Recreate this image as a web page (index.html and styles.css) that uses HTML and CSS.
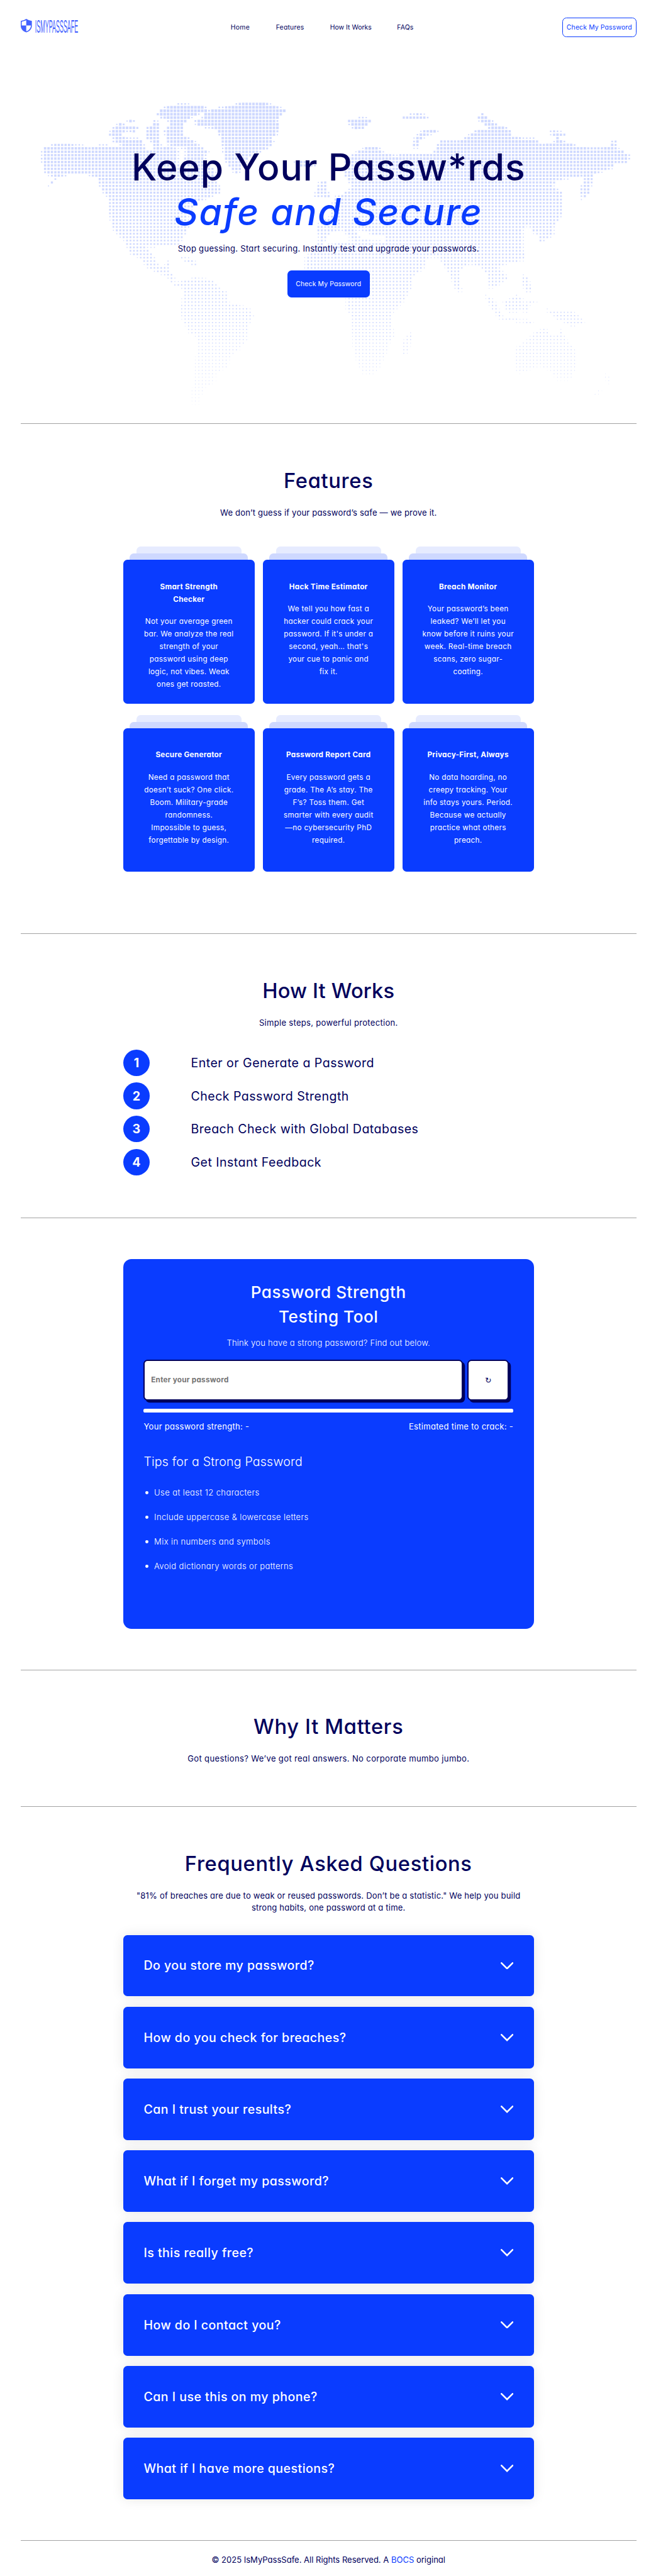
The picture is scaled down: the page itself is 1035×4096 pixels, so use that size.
FILE: index.html
```
<!DOCTYPE html>
<html lang="en">
<head>
<meta charset="utf-8">
<title>IsMyPassSafe</title>
<link rel="stylesheet" href="styles.css">
</head>
<body>
<header class="header">
  <svg class="logo" viewBox="0 0 140 33" role="img" aria-label="IsMyPassSafe">
    <path fill="#4361ff" d="M13.5 0Q20 4.500 27 5V17C27 25 21 31 13.5 33C6 31 0 25 0 17V5Q7 4.500 13.5 0Z"/>
    <path fill="#fff" d="M13.300 3.500V16H2.300V6.800Q8 6 13.300 3.500ZM13.300 16H24.700C24.500 23 20 28 13.300 30.300Z"/>
    <text class="logo-text" transform="translate(35 33) scale(.4 1)" textLength="262" lengthAdjust="spacingAndGlyphs">ISMYPASSSAFE</text>
  </svg>
  <nav class="nav">
    <a class="nav-home">Home</a>
    <a class="nav-features">Features</a>
    <a class="nav-how">How It Works</a>
    <a>FAQs</a>
  </nav>
  <a class="btn btn-outline">Check My Password</a>
</header>

<section class="hero">
  <svg class="map" id="map" viewBox="0 90.500 1600 940" aria-hidden="true"></svg>
  <h1>Keep Your Passw*rds<br><em>Safe and Secure</em></h1>
  <p class="sub sub-hero">Stop guessing. Start securing. Instantly test and upgrade your passwords.</p>
  <a class="btn btn-solid">Check My Password</a>
</section>
<hr>

<section class="features">
  <h2>Features</h2>
  <p class="sub">We don’t guess if your password’s safe — we prove it.</p>
  <div class="cards">
    <article class="card"><h3>Smart Strength<br>Checker</h3><p>Not your average green<br>bar. We analyze the real<br>strength of your<br>password using deep<br>logic, not vibes. Weak<br>ones get roasted.</p></article>
    <article class="card"><h3>Hack Time Estimator</h3><p>We tell you how fast a<br>hacker could crack your<br>password. If it's under a<br>second, yeah… that's<br>your cue to panic and<br>fix it.</p></article>
    <article class="card"><h3>Breach Monitor</h3><p>Your password’s been<br>leaked? We’ll let you<br>know before it ruins your<br>week. Real-time breach<br>scans, zero sugar-<br>coating.</p></article>
    <article class="card"><h3>Secure Generator</h3><p>Need a password that<br>doesn’t suck? One click.<br>Boom. Military-grade<br>randomness.<br>Impossible to guess,<br>forgettable by design.</p></article>
    <article class="card"><h3>Password Report Card</h3><p>Every password gets a<br>grade. The A’s stay. The<br>F’s? Toss them. Get<br>smarter with every audit<br>—no cybersecurity PhD<br>required.</p></article>
    <article class="card"><h3>Privacy-First, Always</h3><p>No data hoarding, no<br>creepy tracking. Your<br>info stays yours. Period.<br>Because we actually<br>practice what others<br>preach.</p></article>
  </div>
</section>
<hr>

<section class="how">
  <h2 class="tight">How It Works</h2>
  <p class="sub sub-how">Simple steps, powerful protection.</p>
  <ol class="steps">
    <li><b>1</b><span>Enter or Generate a Password</span></li>
    <li><b>2</b><span>Check Password Strength</span></li>
    <li><b>3</b><span>Breach Check with Global Databases</span></li>
    <li><b>4</b><span>Get Instant Feedback</span></li>
  </ol>
</section>
<hr>

<section class="tester">
  <div class="tool">
    <h2>Password Strength<br>Testing Tool</h2>
    <p class="tool-sub">Think you have a strong password? Find out below.</p>
    <div class="entry">
      <div class="box field">Enter your password</div>
      <div class="box refresh">↻</div>
    </div>
    <div class="meter"></div>
    <div class="readout"><span>Your password strength: -</span><span>Estimated time to crack: -</span></div>
    <h3>Tips for a Strong Password</h3>
    <ul>
      <li>Use at least 12 characters</li>
      <li>Include uppercase &amp; lowercase letters</li>
      <li>Mix in numbers and symbols</li>
      <li>Avoid dictionary words or patterns</li>
    </ul>
  </div>
</section>
<hr>

<section class="why">
  <h2>Why It Matters</h2>
  <p class="sub sub-why">Got questions? We’ve got real answers. No corporate mumbo jumbo.</p>
</section>
<hr>

<section class="faq">
  <h2>Frequently Asked Questions</h2>
  <p class="sub">"81% of breaches are due to weak or reused passwords. Don’t be a statistic." We help you build<br>strong habits, one password at a time.</p>
  <div class="questions">
    <div class="question"><span>Do you store my password?</span><svg class="chevron" viewBox="0 0 31 18"><path d="M2 2 15.500 15.500 29 2"/></svg></div>
    <div class="question"><span>How do you check for breaches?</span><svg class="chevron" viewBox="0 0 31 18"><path d="M2 2 15.500 15.500 29 2"/></svg></div>
    <div class="question"><span>Can I trust your results?</span><svg class="chevron" viewBox="0 0 31 18"><path d="M2 2 15.500 15.500 29 2"/></svg></div>
    <div class="question"><span>What if I forget my password?</span><svg class="chevron" viewBox="0 0 31 18"><path d="M2 2 15.500 15.500 29 2"/></svg></div>
    <div class="question"><span>Is this really free?</span><svg class="chevron" viewBox="0 0 31 18"><path d="M2 2 15.500 15.500 29 2"/></svg></div>
    <div class="question"><span>How do I contact you?</span><svg class="chevron" viewBox="0 0 31 18"><path d="M2 2 15.500 15.500 29 2"/></svg></div>
    <div class="question"><span>Can I use this on my phone?</span><svg class="chevron" viewBox="0 0 31 18"><path d="M2 2 15.500 15.500 29 2"/></svg></div>
    <div class="question"><span>What if I have more questions?</span><svg class="chevron" viewBox="0 0 31 18"><path d="M2 2 15.500 15.500 29 2"/></svg></div>
  </div>
</section>
<hr>
<footer>© 2025 IsMyPassSafe. All Rights Reserved. A <a>BOCS</a> original</footer>
<script src="map.js"></script>
</body>
</html>
```
FILE: styles.css
```
/* 1rem is ten design pixels; --ls is the tracking in em, resolved per element */
html { font-size: 6.528px; overflow: hidden; --ls: .021; }
* { box-sizing: border-box; letter-spacing: calc(var(--ls) * 1em); }
body {
  margin: 0;
  width: 160rem;
  background: #fff;
  color: #00005c;
  font-family: Inter, "Open Sans", sans-serif;
  font-feature-settings: "cv11";
}
h1, h2, h3, p, ul, ol { margin: 0; padding: 0; font-weight: 400; }
ul, ol { list-style: none; }
hr {
  height: .2rem;
  margin: 0 5rem;
  border: 0;
  border-top: 1px solid #a3a3a3;
}

.header { display: flex; height: 9.05rem; padding: 4.3rem 5rem 0; font-size: 1.6rem; }
.logo { width: 14rem; height: 3.3rem; margin-top: .3rem; overflow: visible; }
.logo-text { font: 400 45px "Liberation Sans", sans-serif; fill: #4361ff; --ls: 0; }
.nav { display: flex; flex: 1; align-items: center; padding-left: 37.2rem; --ls: .02; }
.nav a { white-space: nowrap; }
.nav-home { width: 11rem; }
.nav-features { width: 13.2rem; }
.nav-how { width: 16.3rem; --ls: 0; }
.btn {
  display: flex;
  align-items: center;
  justify-content: center;
  border-radius: 1rem;
  font-size: 1.6rem;
  --ls: .013;
}
.btn-outline { width: 18.1rem; height: 4.75rem; border: 1px solid #0a3cff; color: #0a3cff; }
.btn-solid { position: relative; width: 20.1rem; height: 6.5rem; margin: 3.75rem auto 0; background: #0a3cff; color: #fff; }

.hero { position: relative; height: 94.05rem; padding-top: 26.4rem; text-align: center; }
.map { position: absolute; left: 0; top: 0; width: 160rem; height: 94rem; }
h1 { position: relative; font-size: 9rem; line-height: 10.8rem; font-weight: 500; --ls: .015; }
h1 em { color: #0a3cff; --ls: .028; }
.sub { font-size: 2rem; line-height: 3rem; margin-top: 2.6rem; text-align: center; --ls: .0145; }
.sub-hero { position: relative; margin-top: 2.1rem; --ls: .0215; }
.sub-how { --ls: .022; }
.sub-why { --ls: .027; }

h2 { font-size: 5rem; line-height: 7.5rem; font-weight: 500; text-align: center; --ls: .021; }
h2.tight { --ls: .005; }
.features, .how, .why, .faq { padding-top: 10rem; }
.features { height: 124.05rem; }
.how { height: 68.95rem; }
.why { height: 33.1rem; }
.faq { height: 178.6rem; }

.cards {
  display: grid;
  grid-template-columns: repeat(3, 32rem);
  grid-auto-rows: 34.95rem;
  gap: 6.05rem 2rem;
  justify-content: center;
  margin-top: 10rem;
}
.card {
  position: relative;
  padding-top: 5.1rem;
  border-radius: 1rem;
  background: #0a3cff;
  color: #fff;
  text-align: center;
  font-size: 1.8rem;
  line-height: 3.06rem;
  --ls: .025;
}
.card::before, .card::after { content: ""; position: absolute; border-radius: 1rem 1rem 0 0; height: 1.6rem; }
.card::before { top: -1.6rem; left: 1.6rem; right: 1.6rem; background: #ced8ff; }
.card::after { top: -3.2rem; left: 3.2rem; right: 3.2rem; background: #e6ebff; }
.card h3 { font-size: 1.8rem; font-weight: 700; --ls: .023; }
.card p { margin-top: 2.4rem; }

.steps { display: grid; gap: 1.62rem; margin: 5rem 30rem 0; }
.steps li { display: flex; align-items: center; gap: 10.05rem; height: 6.45rem; font-size: 3rem; --ls: .0235; }
.steps b {
  display: grid;
  place-items: center;
  width: 6.45rem;
  height: 6.45rem;
  border-radius: 50%;
  background: #0a3cff;
  color: #fff;
  --ls: 0;
}

.tester { padding: 10rem 30rem 0; height: 110rem; }
.tool { height: 90rem; padding: 5rem; border-radius: 2rem; background: #0a3cff; color: #fff; font-size: 2rem; line-height: 3rem; }
.tool h2 { font-size: 4rem; line-height: 6rem; }
.tool-sub { margin-top: 2rem; text-align: center; font-weight: 300; --ls: .017; }
.entry { display: flex; gap: 1rem; margin-top: 2.5rem; }
.box {
  display: flex;
  align-items: center;
  height: 9.95rem;
  border: .4rem solid #00005c;
  border-radius: 1rem;
  box-shadow: .5rem .5rem 0 #00005c;
  background: #fff;
}
.field { width: 77.8rem; padding-left: 1.5rem; color: #757575; font-size: 1.8rem; font-weight: 700; --ls: .019; }
.refresh { width: 10.2rem; justify-content: center; color: #00005c; font: 1.9rem "DejaVu Sans", sans-serif; --ls: 0; }
.meter { height: .8rem; margin-top: 2.05rem; border-radius: .4rem; background: #fff; }
.readout { display: flex; justify-content: space-between; margin-top: 2rem; }
.tool h3 { margin-top: 4.95rem; font-size: 3rem; line-height: 4.5rem; font-weight: 300; --ls: .01; }
.tool ul { display: grid; gap: 3rem; margin-top: 3.65rem; font-weight: 300; --ls: .029; }
.tool li { display: flex; align-items: center; gap: 1.4rem; padding-left: .4rem; }
.tool li::before { content: ""; width: .75rem; height: .75rem; border-radius: 50%; background: #fff; }

.questions { display: grid; gap: 2.5rem; margin: 5rem 30rem 0; }
.question {
  display: flex;
  align-items: center;
  justify-content: space-between;
  height: 15rem;
  padding: 0 5rem;
  border-radius: 1rem;
  background: #0a3cff;
  box-shadow: 0 0 3rem rgba(0, 0, 0, .1);
  color: #fff;
  font-size: 3rem;
  font-weight: 500;
  --ls: .0235;
}
.chevron { width: 3.1rem; height: 1.8rem; fill: none; stroke: #fff; stroke-width: 4; stroke-linecap: round; }

footer { margin-top: 3.1rem; font-size: 2rem; line-height: 3rem; text-align: center; --ls: -.001; }
footer a { color: #0a3cff; }
```
FILE: map.js
```
// Land outlines as flat x,y lists in chart units; each becomes a patch of the dot grid.
const LAND = [
  // North America
  "100,345 104,296 135,278 190,284 215,294 245,285 290,292 300,280 340,290 355,310 400,290 430,300 427,380 445,380 447,300 470,290 485,330 500,350 520,410 515,440 530,470 530,500 500,520 470,540 452,600 455,650 442,700 430,730 400,735 350,740 372,790 385,835 400,820 400,800 410,810 405,850 420,870 420,905 440,915 415,905 400,868 385,862 355,835 340,790 315,775 300,710 275,670 265,600 262,520 245,490 235,430 210,415 175,410 140,430 118,470 120,450 135,430 108,410",
  // Arctic islands
  "379,141 392,117 432,101 491,108 498,117 501,132 478,141 452,166 442,191 439,221 445,252 475,277 402,252 396,221 409,191 406,166 383,157",
  "264,231 274,203 290,184 307,200 333,200 326,224 304,218 297,224 290,246 267,252",
  "265,264 287,249 340,258 350,301 297,301 287,271",
  "356,197 366,197 373,169 383,184 383,258 389,286 373,307 369,271 353,255",
  "402,246 448,246 475,277 505,320 488,332 480,345 455,300 402,280",
  "303,171 318,165 330,178 312,182",
  // Greenland, Iceland
  "468,175 491,160 493,141 511,123 551,111 577,98 636,92 663,111 693,126 676,148 666,172 673,197 669,221 666,237 651,246 660,271 651,289 643,301 620,317 597,344 577,406 564,406 551,375 541,344 538,301 534,252 524,215 511,206 475,197",
  "705,355 750,350 765,375 720,385",
  // Caribbean, South America
  "432,785 462,795 482,825 465,822 440,800",
  "440,895 470,880 510,890 530,930 548,945 550,990 600,1015 612,1050 598,1100 595,1160 580,1195 555,1230 548,1280 520,1310 518,1345 495,1370 485,1410 478,1450 462,1445 460,1400 470,1330 468,1270 478,1200 475,1145 455,1125 437,1050 438,990 445,930 418,915 420,905",
  // Africa, Madagascar
  "735,790 755,760 765,740 830,720 880,710 930,720 960,730 1000,760 1025,790 1025,830 990,880 990,930 970,990 945,1040 945,1100 950,1140 935,1180 930,1225 915,1280 900,1312 872,1310 858,1240 850,1180 848,1060 833,1010 833,960 790,930 735,850",
  "970,1170 985,1125 994,1130 988,1180 978,1230 968,1225",
  // Britain, Eurasia
  "757,515 770,450 787,445 787,480 797,520",
  "765,740 770,690 762,670 765,640 800,600 800,560 805,520 830,500 850,470 830,420 830,350 855,320 885,292 910,292 925,320 950,330 990,325 1045,320 1060,262 1110,262 1130,240 1150,215 1185,215 1150,165 1160,140 1195,190 1230,215 1232,250 1290,255 1300,280 1335,275 1340,240 1355,265 1395,290 1440,296 1470,290 1475,262 1487,262 1482,295 1500,310 1518,330 1512,360 1480,360 1475,385 1430,415 1420,500 1403,530 1398,480 1410,425 1395,425 1340,440 1330,470 1352,490 1352,600 1335,650 1335,685 1300,725 1295,700 1310,685 1285,680 1275,640 1258,660 1262,800 1230,810 1200,830 1220,870 1225,885 1200,910 1180,930 1175,870 1160,830 1130,815 1105,850 1112,945 1098,935 1085,870 1070,820 1055,785 1025,790 990,765 950,735 930,720 930,685 895,690 885,670 850,660 870,700 858,715 840,690 825,665 800,670 790,690 775,740",
  // Arctic coast islands
  "835,175 870,160 897,170 880,205 855,212 845,195",
  "995,290 1000,250 1015,222 1055,210 1055,222 1027,240 1010,265 1005,300",
  "968,154 1010,143 1042,158 975,165",
  "1325,217 1375,235 1330,240",
  // South-east Asia
  "1258,860 1272,880 1282,940 1267,945 1258,900",
  "1168,955 1190,980 1210,1050 1238,1068 1205,1066 1185,1020",
  "1213,990 1245,955 1260,975 1252,1030 1223,1035",
  "1258,990 1300,985 1275,1000 1272,1035 1258,1030",
  "1225,1060 1285,1073 1282,1085 1225,1072",
  "1310,1015 1335,1030 1385,1035 1410,1080 1378,1098 1345,1068 1322,1035",
  // Australia, New Zealand
  "1245,1190 1270,1160 1290,1120 1315,1105 1325,1135 1345,1140 1350,1105 1362,1150 1385,1200 1390,1270 1375,1340 1340,1340 1330,1300 1300,1275 1245,1312 1240,1240",
  "1455,1305 1470,1330 1466,1362 1460,1340",
  "1428,1405 1445,1380 1452,1388 1438,1412"
].map(s => s.split(" ").map(p => p.split(",").map(Number)));

const STEP = 8.32, LEFT = 609 - 62 * STEP, TOP = 253.3;

function onLand(px, py) {
  const x = px * 0.9893, y = (py - 200) * 1.8447;
  return LAND.some(shape => {
    let inside = false;
    for (let i = 0, j = shape.length - 1; i < shape.length; j = i++) {
      const [ax, ay] = shape[i], [bx, by] = shape[j];
      if (ay > y !== by > y && x < ax + (bx - ax) * (y - ay) / (by - ay)) inside = !inside;
    }
    return inside;
  });
}

// Squares shrink towards the south, and where a cell is only partly land.
let d = "";
for (let row = 0; row < 90; row++) {
  const y = TOP + row * STEP;
  const full = 6.5 - row * 0.06;
  for (let col = 0; col < 176; col++) {
    const x = LEFT + col * STEP;
    let cover = 0;
    for (const ox of [-3, 0, 3]) for (const oy of [-3, 0, 3]) if (onLand(x + ox, y + oy)) cover++;
    if (cover < 2) continue;
    const s = full * Math.min(1, 0.3 + cover / 10);
    d += `M${(x - s / 2).toFixed(2)} ${(y - s / 2).toFixed(2)}h${s.toFixed(2)}v${s.toFixed(2)}h-${s.toFixed(2)}z`;
  }
}
const dots = document.createElementNS("http://www.w3.org/2000/svg", "path");
dots.setAttribute("d", d);
dots.setAttribute("fill", "#ced8ff");
document.getElementById("map").append(dots);
```
